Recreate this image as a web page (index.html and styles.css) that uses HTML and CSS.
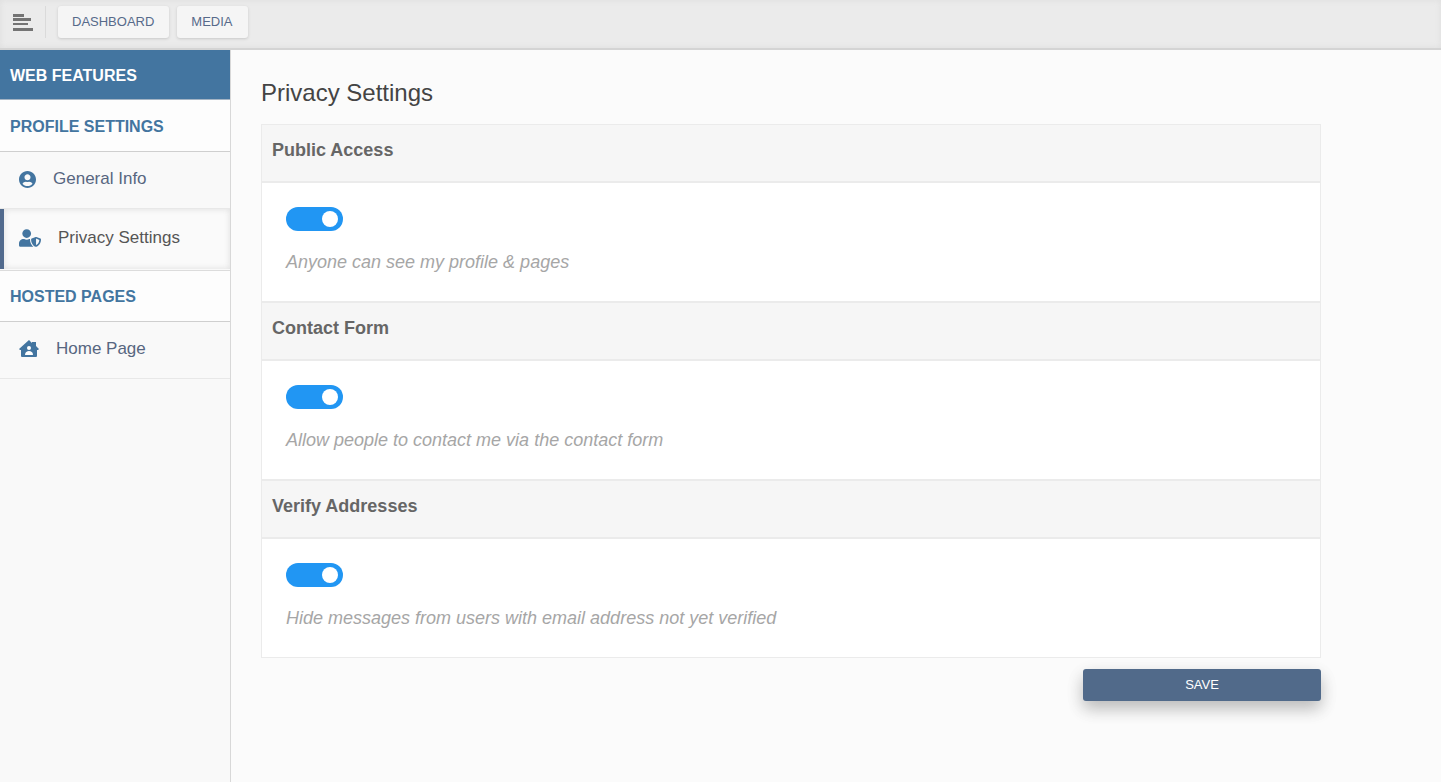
FILE: index.html
```html
<!DOCTYPE html>
<html lang="en">
<head>
<meta charset="utf-8">
<meta name="viewport" content="width=device-width, initial-scale=1">
<title>Privacy Settings</title>
<link rel="stylesheet" href="styles.css">
</head>
<body>
<header class="topbar">
  <button class="menu-toggle" type="button" aria-label="Toggle menu">
    <svg width="20" height="18" viewBox="0 0 20 18" fill="#747474" aria-hidden="true"><path d="M0 1h11v3H0zM0 5h18v3H0zM0 10h15v2H0zM0 15h20v3H0z"/></svg>
  </button>
  <nav class="tabs" aria-label="Main">
    <button class="tab" type="button">DASHBOARD</button>
    <button class="tab" type="button">MEDIA</button>
  </nav>
</header>
<div class="layout">
  <aside class="sidebar">
    <h2 class="side-title">WEB FEATURES</h2>
    <h3 class="side-heading">PROFILE SETTINGS</h3>
    <a class="side-link" href="#">
      <svg width="17" height="17" viewBox="0 0 496 496" fill="#4375a0" aria-hidden="true"><path d="M248 0C111 0 0 111 0 248s111 248 248 248 248-111 248-248S385 0 248 0zm0 96c48.600 0 88 39.400 88 88s-39.400 88-88 88-88-39.400-88-88 39.400-88 88-88zm0 344c-58.700 0-111.300-26.600-146.500-68.200 18.800-35.400 55.600-59.800 98.500-59.800 2.400 0 4.800.4 7.100 1.100 13 4.200 26.600 6.900 40.900 6.900s28-2.700 40.900-6.900c2.300-.7 4.700-1.100 7.100-1.100 42.900 0 79.700 24.400 98.500 59.800C359.300 413.400 306.700 440 248 440z"/></svg>
      <span>General Info</span>
    </a>
    <a class="side-link active" href="#" aria-current="page">
      <svg width="22" height="18" viewBox="0 0 640 512" fill="#4375a0" aria-hidden="true"><path d="M622.300 271.100l-115.200-45c-4.100-1.600-12.600-3.700-22.200 0l-115.200 45c-10.700 4.200-17.700 14-17.700 24.900 0 111.600 68.700 188.800 132.900 213.900 9.600 3.700 18 1.600 22.200 0C558.400 489.900 640 420.500 640 296c0-10.900-7-20.700-17.700-24.900zM496 462.400V273.300l95.500 37.300c-5.600 87.100-60.900 135.400-95.500 151.800zM224 256c70.700 0 128-57.300 128-128S294.700 0 224 0 96 57.300 96 128s57.300 128 128 128zm96 40c0-2.500.8-4.800 1.100-7.200-2.500-.1-4.900-.8-7.500-.8h-16.700c-22.200 10.200-46.900 16-72.900 16s-50.600-5.800-72.900-16h-16.700C60.200 288 0 348.200 0 422.400V464c0 26.500 21.500 48 48 48h352c6.800 0 13.300-1.500 19.200-4-54-42.900-99.200-116.700-99.200-212z"/></svg>
      <span>Privacy Settings</span>
    </a>
    <h3 class="side-heading after-active">HOSTED PAGES</h3>
    <a class="side-link" href="#">
      <svg width="20" height="18" viewBox="0 0 20 18" aria-hidden="true"><path d="M10 0l3 3V2h4v4l3 3-1 1h-1v6q0 1-1 1H3q-1 0-1-1v-6H1L0 9z" fill="#4375a0"/><circle cx="10" cy="8" r="2" fill="#fff"/><path d="M6 15c0-3 2-4 4-4s4 1 4 4z" fill="#fff"/></svg>
      <span>Home Page</span>
    </a>
  </aside>
  <main class="content">
    <h1 class="page-title">Privacy Settings</h1>
    <form class="settings">
      <section class="setting">
        <h2 class="setting-title">Public Access</h2>
        <div class="setting-body">
          <input class="switch" type="checkbox" role="switch" id="public" checked>
          <label class="hint" for="public">Anyone can see my profile &amp; pages</label>
        </div>
      </section>
      <section class="setting">
        <h2 class="setting-title">Contact Form</h2>
        <div class="setting-body">
          <input class="switch" type="checkbox" role="switch" id="contact" checked>
          <label class="hint" for="contact">Allow people to contact me via the contact form</label>
        </div>
      </section>
      <section class="setting">
        <h2 class="setting-title">Verify Addresses</h2>
        <div class="setting-body">
          <input class="switch" type="checkbox" role="switch" id="verify" checked>
          <label class="hint" for="verify">Hide messages from users with email address not yet verified</label>
        </div>
      </section>
      <button class="save" type="button">SAVE</button>
    </form>
  </main>
</div>
</body>
</html>
```
FILE: styles.css
```css
* { box-sizing: border-box; }
body {
  margin: 0;
  min-height: 100vh;
  display: flex;
  flex-direction: column;
  background: #fbfbfb;
  color: #444;
  font-family: "Liberation Sans", Arial, sans-serif;
}
h1, h2, h3 { margin: 0; }
button { font-family: inherit; cursor: pointer; }
.topbar {
  display: flex;
  align-items: flex-start;
  padding: 6px 0 10px;
  background: #ebebeb;
  border-bottom: 2px solid #d4d4d4;
  box-shadow: inset 0 0 6px #dedede;
}
.menu-toggle {
  width: 46px;
  height: 32px;
  padding: 0 0 0 13px;
  display: flex;
  align-items: center;
  border: 0;
  border-right: 1px solid #dadada;
  background: none;
}
.tabs { display: flex; gap: 8px; padding-left: 12px; }
.tab {
  height: 32px;
  padding: 0 15px 2px 14px;
  border: 0;
  border-radius: 3px;
  background: #f5f5f5;
  color: #576a8a;
  font-size: 13px;
  box-shadow: 0 1px 3px #c8c8c8;
}
.layout { flex: 1; display: flex; }
.sidebar {
  flex: 0 0 231px;
  background: #f9f9f9;
  border-right: 1px solid #d8d8d8;
}
.side-title, .side-heading {
  display: flex;
  align-items: center;
  padding: 2px 10px 0;
  font-size: 16px;
}
.side-title {
  height: 50px;
  background: #4375a0;
  color: #fff;
  border-bottom: 1px solid #a4b4c4;
}
.side-heading {
  height: 52px;
  background: #fdfdfd;
  color: #4375a0;
  border-bottom: 1px solid #cfcfcf;
}
.after-active { margin-top: 1px; border-top: 1px solid #dcdcdc; }
.side-link {
  height: 57px;
  padding: 0 19px 2px;
  display: flex;
  align-items: center;
  gap: 17px;
  color: #576680;
  font-size: 17px;
  text-decoration: none;
  border-bottom: 1px solid #e8e8e8;
}
.side-link.active {
  height: 60px;
  padding-left: 15px;
  background: #fafafa;
  color: #555;
  border-left: 4px solid #516a8d;
  border-bottom: 0;
  box-shadow: inset 0 0 6px #dedede;
}
.content { flex: 1; padding: 28px 120px 40px 30px; }
.page-title {
  font-size: 24px;
  font-weight: 400;
  line-height: 30px;
  margin-bottom: 16px;
}
.settings { display: flex; flex-direction: column; }
.setting {
  background: #fff;
  border: 1px solid #ebebeb;
}
.setting-title {
  height: 58px;
  padding: 14px 10px;
  background: #f6f6f6;
  border-bottom: 2px solid #ebebeb;
  color: #666;
  font-size: 18px;
  line-height: 22px;
}
.setting-body {
  padding: 24px 24px 28px;
  display: flex;
  flex-direction: column;
  align-items: flex-start;
  gap: 20px;
}
.switch {
  appearance: none;
  width: 57px;
  height: 24px;
  margin: 0;
  padding: 4px 5px;
  display: flex;
  border-radius: 12px;
  background: #bbb;
  cursor: pointer;
}
.switch::before {
  content: "";
  width: 16px;
  height: 16px;
  border-radius: 50%;
  background: #fff;
}
.switch:checked { background: #2196f3; justify-content: flex-end; }
.hint {
  color: #a6a6a6;
  font-size: 18px;
  font-style: italic;
  line-height: 22px;
}
.save {
  align-self: flex-end;
  width: 238px;
  height: 32px;
  margin-top: 11px;
  padding: 0 0 2px;
  border: 0;
  border-radius: 3px;
  background: #516a8a;
  color: #fff;
  font-size: 13px;
  box-shadow: 0 8px 16px rgba(0, 0, 0, .2), 0 6px 20px rgba(0, 0, 0, .08);
}
```
